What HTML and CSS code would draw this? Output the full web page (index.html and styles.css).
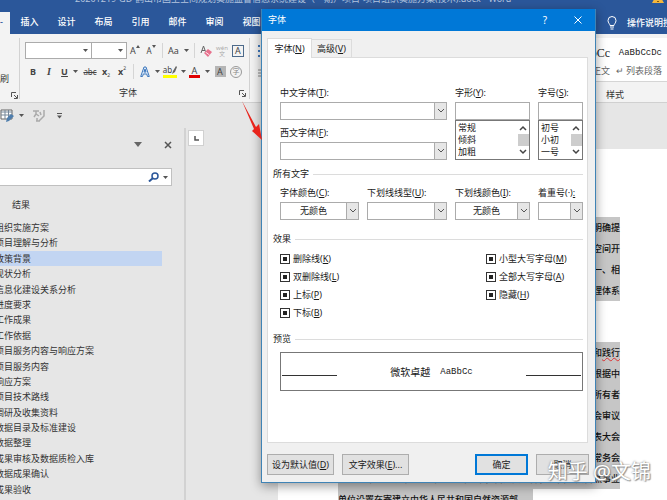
FILE: index.html
```html
<!DOCTYPE html>
<html lang="zh-CN">
<head>
  <meta charset="UTF-8" />
  <meta name="viewport" content="width=device-width, initial-scale=1.0"/>
  <title>Word - 字体</title>
  <link rel="stylesheet" href="styles.css">
</head>
<body>

<!-- shared icons -->
<svg class="defs" width="0" height="0">
  <symbol id="caret" viewBox="0 0 5 3"><path d="M0 0h5L2.500 3z" fill="#555"/></symbol>
  <symbol id="chevron" viewBox="0 0 8 6"><path d="M1 1l3 3 3-3" fill="none" stroke="#555" stroke-width="1"/></symbol>
  <symbol id="chevron-bold" viewBox="0 0 8 6"><path d="M1 1l3 3 3-3" fill="none" stroke="#444" stroke-width="1.500"/></symbol>
  <symbol id="launcher" viewBox="0 0 7 7"><path d="M.5 5V.5H5M3 3l3 3M6.500 3v3.500H3" fill="none" stroke="#555"/></symbol>
</svg>

<header class="titlebar">
  <div class="doc-title">20201219-GD-鹤山市国土空间规划实施监督信息系统建设（一期）项目-项目组织实施方案(技术).docx - Word</div>
  <svg class="warn" viewBox="0 0 12 12"><path d="M6 0l6 11H0z" fill="#f6b73c"/><path d="M6 4v4M6 9v1" stroke="#5c3b00" stroke-width="1.500"/></svg>
</header>

<nav class="tabs">
  <a class="tab active" href="#" aria-label="开始"><span>-</span></a>
  <a class="tab" href="#">插入</a>
  <a class="tab" href="#">设计</a>
  <a class="tab" href="#">布局</a>
  <a class="tab" href="#">引用</a>
  <a class="tab" href="#">邮件</a>
  <a class="tab" href="#">审阅</a>
  <a class="tab" href="#">视图</a>
  <a class="tell-me" href="#">
    <svg width="10" height="14" viewBox="0 0 10 14"><path d="M3 9.500C3 8 1 7 1 4.500a4 4 0 018 0C9 7 7 8 7 9.500zM3 11h4M3.500 13h3" fill="none" stroke="#fff"/></svg>
    操作说明搜索
  </a>
</nav>

<section class="ribbon">
  <div class="group clipboard">
    <span class="brush">刷</span>
    <svg class="launch" width="7" height="7"><use href="#launcher"/></svg>
  </div>
  <div class="group font-group">
    <div class="tools">
      <div class="name-box"><svg class="caret"><use href="#caret"/></svg></div>
      <div class="size-box"><svg class="caret"><use href="#caret"/></svg></div>
      <button class="tool" aria-label="增大字号">A<svg class="up" width="4" height="3" viewBox="0 0 4 3"><path d="M0 3h4L2 0z" fill="#555"/></svg></button>
      <button class="tool small" aria-label="减小字号">A<svg class="up" width="4" height="3" viewBox="0 0 4 3"><path d="M0 0h4L2 3z" fill="#555"/></svg></button>
      <span class="sep"></span>
      <button class="tool wide">Aa<svg class="caret"><use href="#caret"/></svg></button>
      <span class="sep"></span>
      <button class="tool" aria-label="清除格式">
        <svg width="12" height="12" viewBox="0 0 12 12"><path d="M1 8L3.500 1 6 8M2 5.500h3" fill="none" stroke="#666"/><path d="M4 8l4-4 4 3-4 5z" fill="#e8718d"/><path d="M5.500 7l4 3" stroke="#fff" stroke-width=".8"/></svg>
      </button>
      <button class="tool pinyin"><span>wén</span><span>文</span></button>
      <button class="tool"><span class="boxed">A</span></button>
    </div>
    <div class="tools">
      <button class="tool"><b>B</b></button>
      <button class="tool"><i class="serif">I</i></button>
      <button class="tool wide"><b><u>U</u></b><svg class="caret"><use href="#caret"/></svg></button>
      <button class="tool small"><s>abc</s></button>
      <button class="tool script"><b>x</b><sub>2</sub></button>
      <button class="tool script"><b>x</b><sup>2</sup></button>
      <span class="sep"></span>
      <button class="tool wide" aria-label="文本效果">
        <svg width="10" height="12" viewBox="0 0 10 12"><path d="M.7 10.500L4 1h2l3.300 9.500H7.500L6.700 8H3.300l-.8 2.500zM4 6l1-3 1 3z" fill="#dce9f8" stroke="#3e78bd"/></svg>
        <svg class="caret"><use href="#caret"/></svg>
      </button>
      <button class="tool wide marker" aria-label="突出显示">
        <span class="marked">ab<svg width="5" height="8" viewBox="0 0 5 8"><path d="M0 8l1-3 3-5 1 1-2 5z" fill="#666"/></svg></span>
        <svg class="caret"><use href="#caret"/></svg>
      </button>
      <button class="tool wide"><span class="colored">A</span><svg class="caret"><use href="#caret"/></svg></button>
      <button class="tool"><span class="shaded">A</span></button>
      <button class="tool"><span class="circled">字</span></button>
    </div>
    <div class="group-name">字体<svg class="launch" width="7" height="7"><use href="#launcher"/></svg></div>
  </div>
  <div class="group paragraph">
    <svg width="10" height="40" viewBox="0 0 10 40"><path d="M0 2h2M0 7h2M0 12h2" stroke="#3e78bd" stroke-width="2"/><path d="M4 2h6M4 7h6M4 12h6M0 26h10M0 29h10M0 32h10" stroke="#888"/></svg>
  </div>
  <div class="group styles-group">
    <div class="gallery">
      <div class="style-card"><span class="sample big">AaBbCc</span><span>↵ 正文</span></div>
      <div class="style-card"><span class="sample">AaBbCcDc</span><span>↵ 列表段落</span></div>
    </div>
    <div class="group-name">样式</div>
  </div>
</section>

<div class="quick-bar">
  <svg width="14" height="14" viewBox="0 0 14 14"><path d="M1 1h11v9H1z" fill="#fff" stroke="#666"/><path d="M1 3h11M1 6h11M5 1v9M8.500 1v9" stroke="#789"/><path d="M6 13l1-4 4-4 3 2-5 5z" fill="#4f7ead"/></svg>
  <svg class="caret"><use href="#caret"/></svg>
  <svg width="14" height="14" viewBox="0 0 14 14"><path d="M1 2h6M4 2v3L2 8M4 5l3 2M8 3l1 3M12 1v6l-5 5H4M5 9v3h3" fill="none" stroke="#aaa" stroke-width="1.500"/></svg>
  <svg width="5" height="6" viewBox="0 0 5 6"><path d="M0 .5h5" stroke="#555"/><path d="M0 2.500h5L2.500 5.500z" fill="#555"/></svg>
</div>

<main class="workspace">
  <aside class="nav-pane">
    <div class="pane-head">
      <svg width="8" height="5" viewBox="0 0 8 5"><path d="M0 0h8L4 5z" fill="#666"/></svg>
      <svg width="8" height="8" viewBox="0 0 8 8"><path d="M1 1l6 6M7 1L1 7" stroke="#555" stroke-width="1.500"/></svg>
    </div>
    <div class="search">
      <input type="text" aria-label="搜索文档">
      <svg width="11" height="10" viewBox="0 0 11 10"><circle cx="7" cy="4" r="3" fill="none" stroke="#2b579a" stroke-width="1.500"/><path d="M5 6L1 9.500" stroke="#2b579a" stroke-width="2"/></svg>
      <svg class="caret"><use href="#caret"/></svg>
    </div>
    <div class="pane-tab">结果</div>
    <ul class="outline">
      <li>组织实施方案</li>
      <li>项目理解与分析</li>
      <li class="current">政策背景</li>
      <li>现状分析</li>
      <li>信息化建设关系分析</li>
      <li>进度要求</li>
      <li>工作成果</li>
      <li>工作依据</li>
      <li>项目服务内容与响应方案</li>
      <li>项目服务内容</li>
      <li>响应方案</li>
      <li>项目技术路线</li>
      <li>调研及收集资料</li>
      <li>数据目录及标准建设</li>
      <li>数据整理</li>
      <li>成果审核及数据质检入库</li>
      <li>数据成果确认</li>
      <li>成果验收</li>
    </ul>
  </aside>

  <div class="canvas">
    <div class="ruler"><span class="corner"><svg width="5" height="5" viewBox="0 0 5 5"><path d="M1 0v4h4" fill="none" stroke="#555" stroke-width="1.500"/></svg></span></div>
    <article class="page">
      <p>明确提<br>空间开<br>一、相<br>理体系</p>
      <p>和<span class="typo">践行</span><br>根据中<br>所有者<br>会审议<br>表大会<br>常务会<br>和、创造性的成果的创新成果，自然资源部，全面落实自然事业</p>
      <p class="last">单位设置在寄建立由华人民共和国自然资源部</p>
    </article>
  </div>
</main>

<form class="dialog" role="dialog" aria-label="字体">
  <div class="dialog-title">
    <span>字体</span>
    <button type="button" class="help">?</button>
    <button type="button" class="close" aria-label="关闭"><svg width="8" height="8" viewBox="0 0 8 8"><path d="M.5.5l7 7M7.500.5l-7 7" stroke="#fff"/></svg></button>
  </div>

  <div class="dialog-tabs">
    <button type="button" class="dialog-tab active">字体(<u>N</u>)</button>
    <button type="button" class="dialog-tab">高级(<u>V</u>)</button>
  </div>

  <div class="panel">
    <div class="row fonts">
      <div class="col w-font">
        <label for="cn-font">中文字体(<u>T</u>):</label>
        <div class="combo"><select id="cn-font"></select><span class="arrow"><svg width="8" height="6"><use href="#chevron"/></svg></span></div>
        <label for="en-font">西文字体(<u>F</u>):</label>
        <div class="combo"><select id="en-font"></select><span class="arrow"><svg width="8" height="6"><use href="#chevron"/></svg></span></div>
      </div>
      <div class="col w-style">
        <label for="style">字形(<u>Y</u>):</label>
        <input class="field" id="style" type="text">
        <div class="listbox">
          <select size="3" aria-label="字形列表"><option>常规</option><option>倾斜</option><option>加粗</option></select>
          <span class="scroll"><svg width="8" height="6" class="flip"><use href="#chevron-bold"/></svg><i></i><svg width="8" height="6"><use href="#chevron-bold"/></svg></span>
        </div>
      </div>
      <div class="col w-size">
        <label for="size">字号(<u>S</u>):</label>
        <input class="field" id="size" type="text">
        <div class="listbox">
          <select size="3" aria-label="字号列表"><option>初号</option><option>小初</option><option>一号</option></select>
          <span class="scroll"><svg width="8" height="6" class="flip"><use href="#chevron-bold"/></svg><i></i><svg width="8" height="6"><use href="#chevron-bold"/></svg></span>
        </div>
      </div>
    </div>

    <div class="legend">所有文字</div>
    <div class="row">
      <div class="col w-color">
        <label for="color">字体颜色(<u>C</u>):</label>
        <div class="combo"><select id="color"><option>无颜色</option></select><span class="arrow"><svg width="8" height="6"><use href="#chevron"/></svg></span></div>
      </div>
      <div class="col w-line">
        <label for="line">下划线线型(<u>U</u>):</label>
        <div class="combo"><select id="line"></select><span class="arrow"><svg width="8" height="6"><use href="#chevron"/></svg></span></div>
      </div>
      <div class="col w-style">
        <label for="line-color">下划线颜色(<u>I</u>):</label>
        <div class="combo"><select id="line-color"><option>无颜色</option></select><span class="arrow"><svg width="8" height="6"><use href="#chevron"/></svg></span></div>
      </div>
      <div class="col w-size">
        <label for="mark">着重号(·)<u>:</u></label>
        <div class="combo"><select id="mark"></select><span class="arrow"><svg width="8" height="6"><use href="#chevron"/></svg></span></div>
      </div>
    </div>

    <div class="legend effects-legend">效果</div>
    <div class="effects">
      <div class="checks">
        <label><input type="checkbox">删除线(<u>K</u>)</label>
        <label><input type="checkbox">双删除线(<u>L</u>)</label>
        <label><input type="checkbox">上标(<u>P</u>)</label>
        <label><input type="checkbox">下标(<u>B</u>)</label>
      </div>
      <div class="checks second">
        <label><input type="checkbox">小型大写字母(<u>M</u>)</label>
        <label><input type="checkbox">全部大写字母(<u>A</u>)</label>
        <label><input type="checkbox">隐藏(<u>H</u>)</label>
      </div>
    </div>

    <div class="legend preview-legend">预览</div>
    <div class="preview"><hr><span>微软卓越</span><span class="latin">AaBbCc</span><hr></div>
  </div>

  <div class="actions">
    <button type="button" class="btn long">设为默认值(<u>D</u>)</button>
    <button type="button" class="btn long">文字效果(<u>E</u>)...</button>
    <button type="button" class="btn primary">确定</button>
    <button type="button" class="btn">取消</button>
  </div>
</form>

<svg class="pointer" width="22" height="42" viewBox="0 0 22 42"><path d="M0 0l14 26 3-3 3 16-10-9 2-2z" fill="#e8241c"/></svg>
<div class="watermark">知乎 @文锦</div>

</body>
</html>
```

FILE: styles.css
```css
* {
  box-sizing: border-box;
}

body {
  font-family: "Noto Sans", "Noto Sans CJK SC", sans-serif;
  font-size: 9px;
  line-height: 12px;
  margin: 0;
  height: 100vh;
  display: flex;
  flex-direction: column;
  overflow: hidden;
  position: relative;
  background: #e6e6e6;
  color: #333;
}

button, input, select {
  font: inherit;
  color: inherit;
  margin: 0;
  padding: 0;
  border: none;
  border-radius: 0;
  background: none;
  min-width: 0;
}

a {
  color: inherit;
  text-decoration: none;
}

u {
  text-underline-offset: 1px;
}

svg {
  display: block;
  flex: none;
}

.defs {
  position: absolute;
}

.caret {
  width: 5px;
  height: 3px;
}

/* title bar and ribbon tabs */
.titlebar {
  display: flex;
  justify-content: space-between;
  height: 12px;
  flex: none;
  overflow: hidden;
  background: #2b579a;
}

.doc-title {
  margin: -7px 0 0 75px;
  color: #b4c5df;
  white-space: nowrap;
}

.warn {
  width: 12px;
  height: 12px;
  margin: -8px 3px 0 0;
}

.tabs {
  display: flex;
  height: 22px;
  flex: none;
  background: #2b579a;
  color: #fff;
  font-weight: 500;
  line-height: 20px;
  overflow: hidden;
}

.tab {
  flex: none;
  width: 37px;
  text-align: center;
}

.tab.active {
  width: 10px;
  margin-right: 1px;
  background: #f3f3f3;
  color: #2b579a;
  text-align: left;
}

.tell-me {
  display: flex;
  align-items: center;
  gap: 10px;
  width: 60px;
  margin-left: auto;
  white-space: nowrap;
}

/* ribbon */
.ribbon {
  display: flex;
  height: 69px;
  flex: none;
  background: #f3f3f3;
  border-bottom: 1px solid #d0d0d0;
}

.group {
  margin: 4px 0 3px;
  border-right: 1px solid #d2d2d2;
}

.clipboard {
  width: 20px;
  display: flex;
  flex-direction: column;
  justify-content: space-between;
  padding-top: 35px;
}

.clipboard .launch {
  margin-left: 11px;
}

.font-group {
  width: 230px;
  display: flex;
  flex-direction: column;
  padding: 4px 3px 0 5px;
}

.tools {
  display: flex;
  align-items: center;
  height: 18px;
  margin-bottom: 4px;
}

.name-box, .size-box {
  display: flex;
  align-items: center;
  justify-content: flex-end;
  width: 67px;
  height: 17px;
  padding-right: 3px;
  background: #fff;
  border: 1px solid #ababab;
}

.size-box {
  width: 35px;
  border-left: none;
}

.tool {
  display: flex;
  align-items: center;
  justify-content: center;
  width: 16px;
  font-size: 9px;
  line-height: 12px;
  color: #444;
}

.tool.wide {
  width: 25px;
  gap: 5px;
}

.tool.marker {
  gap: 4px;
}

.tool.small {
  font-size: 8px;
}

.tool .up {
  align-self: flex-start;
}

.sep {
  width: 1px;
  height: 15px;
  margin: 0 3px;
  background: #d5d5d5;
}

.serif {
  font-family: "Liberation Serif", serif;
  font-weight: bold;
  font-size: 10px;
}

.script sub, .script sup {
  font-size: 5px;
  line-height: 5px;
}

.script sub {
  align-self: flex-end;
}

.script sup {
  align-self: flex-start;
}

.pinyin {
  flex-direction: column;
  font-size: 6px;
  line-height: 6px;
  color: #aaa;
}

.boxed {
  width: 12px;
  border: 1px solid #4d6a8a;
  line-height: 10px;
}

.marked {
  display: flex;
  height: 12px;
  font-size: 8px;
  line-height: 8px;
  border-bottom: 3px solid #ff0;
}

.colored {
  width: 11px;
  line-height: 9px;
  border-bottom: 3px solid #e00000;
}

.shaded {
  width: 11px;
  line-height: 11px;
  background: #b5b5b5;
}

.circled {
  width: 12px;
  border: 1px solid #999;
  border-radius: 50%;
  font-size: 7px;
  line-height: 10px;
  color: #888;
}

.group-name {
  display: flex;
  align-items: center;
  margin-top: 3px;
  padding-left: 94px;
}

.group-name .launch {
  margin-left: auto;
}

.paragraph {
  padding: 6px 0 0 8px;
  border: none;
}

.styles-group {
  width: 160px;
  margin-left: auto;
  border: none;
  flex: none;
}

.gallery {
  display: flex;
  justify-content: flex-end;
  height: 44px;
  padding-right: 5px;
  background: #fff;
  border-bottom: 1px solid #d5d5d5;
}

.style-card {
  display: flex;
  flex-direction: column;
  gap: 2px;
  width: 52px;
  padding: 7px 0 0;
  line-height: 16px;
  color: #666;
  text-align: right;
  white-space: nowrap;
}

.sample {
  font-family: "Liberation Mono", monospace;
  font-size: 9px;
  color: #222;
}

.sample.big {
  font-family: "Liberation Serif", serif;
  font-size: 12px;
}

.styles-group .group-name {
  padding-left: 99px;
  margin-top: 7px;
}

.quick-bar {
  display: flex;
  align-items: center;
  gap: 5px;
  height: 25px;
  flex: none;
  padding-left: 0;
}

.quick-bar svg:nth-child(3) {
  margin: 0 6px 0 3px;
}

/* navigation pane */
.workspace {
  flex: 1;
  display: flex;
  min-height: 0;
}

.nav-pane {
  display: flex;
  flex-direction: column;
  width: 186px;
  flex: none;
  padding-bottom: 3px;
  border-right: 2px solid #d2d2d2;
}

.pane-head {
  display: flex;
  align-items: center;
  justify-content: flex-end;
  gap: 22px;
  height: 33px;
  padding-right: 12px;
}

.search {
  display: flex;
  align-items: center;
  gap: 4px;
  height: 18px;
  margin: 7px 12px 0 0;
  padding-right: 3px;
  background: #fff;
  border: 1px solid #c0c0c0;
  border-left: none;
}

.search input {
  flex: 1;
}

.pane-tab {
  margin: 13px 0 9px;
  padding-left: 12px;
}

.outline {
  flex: 1;
  display: flex;
  flex-direction: column;
  list-style: none;
  margin: 0 22px 0 0;
  padding: 0;
}

.outline li {
  flex: 1;
  line-height: 15px;
  text-indent: -5px;
  white-space: nowrap;
}

.outline .current {
  background: #c2d5f2;
}

/* document */
.canvas {
  flex: 1;
  display: flex;
  flex-direction: column;
  min-width: 0;
}

.ruler {
  height: 21px;
  flex: none;
  padding: 2px;
}

.corner {
  display: flex;
  align-items: center;
  justify-content: center;
  width: 16px;
  height: 16px;
  background: #fff;
  border: 1px solid #d0d0d0;
}

.page {
  flex: 1;
  margin-left: 92px;
  padding: 68px 47px 0 60px;
  background: #fff;
  color: #111;
  font-weight: 500;
  line-height: 21px;
  text-align: right;
  white-space: nowrap;
}

.page p {
  margin: 0 0 41px;
  background: #c6c6c6;
}

.page p + p {
  margin: 0;
}

.page .last {
  width: fit-content;
  padding-right: 15px;
}

.typo {
  text-decoration: underline wavy #d33;
  text-decoration-thickness: 1px;
}

/* font dialog */
.dialog {
  position: absolute;
  left: 261px;
  top: 9px;
  width: 335px;
  background: #f0f0f0;
  border: 1px solid #3f83b5;
  border-top: none;
  box-shadow: 0 3px 10px rgba(0,0,0,0.4);
  color: #1a1a1a;
}

.dialog-title {
  display: flex;
  align-items: center;
  height: 22px;
  padding: 0 13px 0 6px;
  background: #0078d7;
  color: #fff;
}

.help {
  margin-left: auto;
  font-size: 10px;
}

.close {
  margin-left: 27px;
}

.dialog-tabs {
  display: flex;
  align-items: flex-end;
  padding: 7px 5px 0;
}

.dialog-tab {
  width: 40px;
  height: 18px;
  border: 1px solid #dcdcdc;
  border-left: none;
  border-bottom: none;
}

.dialog-tab.active {
  width: 45px;
  height: 20px;
  margin-bottom: -1px;
  background: #fff;
  border-left: 1px solid #dcdcdc;
}

.panel {
  height: 386px;
  margin: 0 7px 0 5px;
  padding: 29px 4px 0 5px;
  background: #fff;
  border: 1px solid #dcdcdc;
}

.row {
  display: flex;
  gap: 8px;
  padding-left: 7px;
}

.col {
  display: flex;
  flex-direction: column;
}

.col label {
  height: 15px;
  white-space: nowrap;
}

.w-font {
  flex: 1;
}

.w-color {
  flex: 1;
}

.w-line {
  width: 80px;
}

.w-style {
  width: 75px;
}

.w-size {
  width: 45px;
}

.combo {
  display: flex;
  height: 18px;
  border: 1px solid #ababab;
  background: #fff;
}

.fonts .combo + label {
  margin-top: 7px;
}

.combo select {
  flex: 1;
  appearance: none;
  text-align-last: center;
}

.arrow {
  display: flex;
  align-items: center;
  justify-content: center;
  width: 12px;
  background: #e6e6e6;
  border-left: 1px solid #ababab;
}

.field {
  height: 18px;
  background: #fff;
  border: 1px solid #ababab;
}

.listbox {
  display: flex;
  height: 40px;
  border: 1px solid #777;
}

.listbox select {
  flex: 1;
  height: 38px;
  overflow: hidden;
  appearance: none;
  outline: none;
}

.listbox option {
  height: 12px;
  min-height: 12px;
  padding: 0 2px;
  line-height: 12px;
}

.scroll {
  display: flex;
  flex-direction: column;
  align-items: center;
  justify-content: space-between;
  width: 12px;
  padding: 4px 0;
}

.scroll i {
  width: 11px;
  height: 12px;
  background: #cdcdcd;
}

.flip {
  transform: rotate(180deg);
}

.legend {
  display: flex;
  align-items: center;
  gap: 4px;
  margin: 8px 0 7px;
}

.legend::after {
  content: "";
  flex: 1;
  height: 1px;
  background: #dcdcdc;
}

.effects-legend {
  margin: 13px 0 8px;
}

.effects {
  display: flex;
  padding-left: 7px;
}

.checks {
  flex: 1;
  display: flex;
  flex-direction: column;
  gap: 6px;
}

.checks.second {
  flex: none;
  width: 97px;
}

.checks label {
  display: flex;
  align-items: center;
}

.checks input {
  appearance: none;
  width: 10px;
  height: 10px;
  margin-right: 3px;
  border: 1px solid #333;
  background: #222 content-box;
  padding: 2px;
}

.preview-legend {
  margin: 14px 0 7px;
}

.preview {
  display: flex;
  align-items: center;
  height: 39px;
  margin-left: 7px;
  padding: 0 1px;
  border: 1px solid #777;
  font-size: 10px;
}

.preview .latin {
  margin-left: 10px;
  font-family: "Liberation Mono", monospace;
  font-size: 9px;
}

.preview hr {
  width: 55px;
  margin: 8px auto 0 0;
  border: none;
  border-top: 1px solid #333;
}

.preview .latin + hr {
  margin: 8px 0 0 auto;
}

.actions {
  display: flex;
  gap: 8px;
  padding: 11px 6px 7px 5px;
}

.btn {
  width: 53px;
  height: 21px;
  background: #e1e1e1;
  border: 1px solid #adadad;
  white-space: nowrap;
}

.btn.long {
  width: 67px;
}

.btn.primary {
  margin-left: auto;
  border: 2px solid #0078d7;
}

/* overlays */
.pointer {
  position: absolute;
  left: 242px;
  top: 101px;
}

.watermark {
  position: absolute;
  right: 16px;
  bottom: 14px;
  font-size: 20px;
  line-height: 28px;
  color: #fff;
  text-shadow: 0 0 2px #777, 1px 1px 1px #999;
}
```
